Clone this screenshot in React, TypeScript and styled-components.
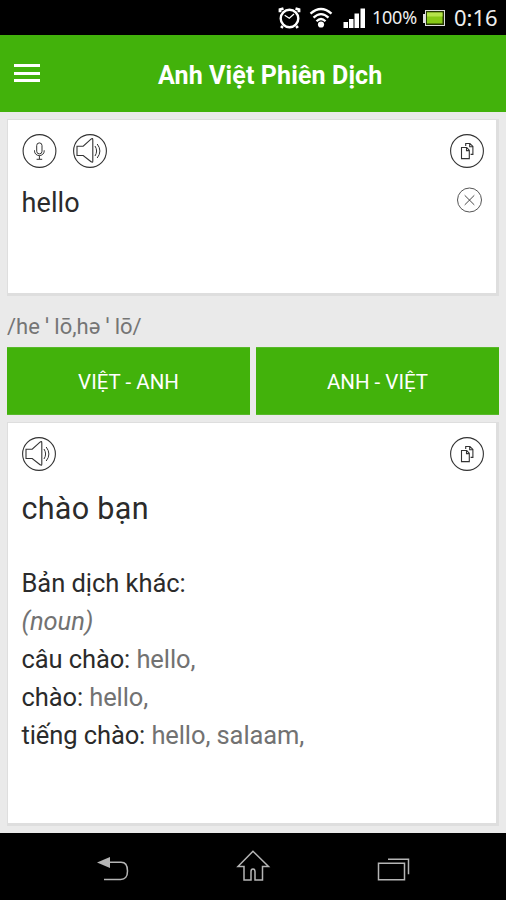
import React from 'react';
import styled, { createGlobalStyle } from 'styled-components';

const Global = createGlobalStyle`
  * { box-sizing: border-box; }
  body { margin: 0; background: #000; font-family: Roboto, "Noto Sans", sans-serif; }
`;

const Screen = styled.div`
  width: 506px;
  height: 900px;
  display: flex;
  flex-direction: column;
  background: #eaeaea;
  overflow: hidden;
`;

const StatusBar = styled.div`
  height: 35px;
  flex: none;
  background: #000;
  display: flex;
  align-items: center;
  justify-content: flex-end;
  padding-right: 8px;
  color: #eee;
  font-family: "Noto Sans", sans-serif;
`;

const StatusIcons = styled.svg`
  display: block;
  flex: none;
`;

const StatusText = styled.span<{ $size: number; $gap: number; $width: number; $tracking: number }>`
  flex: none;
  width: ${p => p.$width}px;
  font-size: ${p => p.$size}px;
  letter-spacing: ${p => p.$tracking}px;
  margin-left: ${p => p.$gap}px;
  line-height: 35px;
  white-space: nowrap;
`;

const Header = styled.header`
  height: 76.5px;
  flex: none;
  background: #42b20b;
  display: grid;
  grid-template-columns: 34px 1fr;
  align-items: center;
  padding: 0 0 0 14px;
`;

const MenuButton = styled.div`
  width: 26px;
  height: 18px;
  display: flex;
  flex-direction: column;
  justify-content: space-between;
`;

const MenuLine = styled.span`
  height: 3px;
  background: #fff;
`;

const Title = styled.h1`
  margin: 6px 0 0 110px;
  color: #fff;
  font-size: 25px;
  font-weight: 700;
  line-height: 32px;
  letter-spacing: 0.12px;
  white-space: nowrap;
`;

const Content = styled.main`
  flex: 1;
  display: flex;
  flex-direction: column;
  padding: 7.5px 7px 7px;
`;

const Card = styled.section<{ $height: number }>`
  height: ${p => p.$height}px;
  flex: none;
  background: #fff;
  border: solid #dedede;
  border-width: 1px 3px 3px 1px;
  padding: 13px 12px 0 14px;
`;

const Toolbar = styled.div`
  display: flex;
  height: 36px;
  gap: 15px;
`;

const Spacer = styled.div`
  flex: 1;
`;

const Icon = styled.svg`
  display: block;
  flex: none;
  fill: none;
  stroke: #333;
`;

const InputRow = styled.div`
  display: flex;
  justify-content: space-between;
  align-items: center;
  padding: 13px 0 0;
`;

const Line = styled.p<{ $size: number; $height: number; $top?: number; $tracking?: number }>`
  margin: ${p => p.$top ?? 0}px 0 0 -0.5px;
  font-size: ${p => p.$size}px;
  line-height: ${p => p.$height}px;
  letter-spacing: ${p => p.$tracking ?? 0}px;
  color: #2b2b2b;
  white-space: pre;
`;

const Muted = styled.span`
  color: #727272;
`;

const Phonetic = styled.div`
  height: 51px;
  padding-top: 16px;
  color: #757575;
  font-size: 22px;
  line-height: 30px;
  white-space: pre;
`;

const Actions = styled.div`
  display: grid;
  grid-template-columns: 1fr 1fr;
  gap: 6px;
  height: 68px;
  margin: 0 0 7px;
`;

const ActionButton = styled.button`
  border: 0;
  border-top: 1px solid #58b92a;
  border-bottom: 1px solid #58b92a;
  background: #42b20b;
  color: #fff;
  font: 400 20.5px/30px Roboto, sans-serif;
  padding: 1px 0 0;
`;

const NavBar = styled.nav`
  height: 67px;
  flex: none;
  background: #000;
`;

const Sound = () => (
  <Icon width="34" height="36" viewBox="0 0 34 36">
    <circle cx="17" cy="18" r="16.4" strokeWidth="1.1" />
    <path d="M4 13.2h6.2L18 6.200q1.800-1.500 1.800.700v21q0 2.200-1.700.800L10.200 22.500H4z" strokeWidth="1.100" />
    <path d="M22 13q3.200 5 0 10M24.200 11q5.400 7 0 14" strokeWidth="1" />
  </Icon>
);

const Mic = () => (
  <Icon width="36" height="36" viewBox="0 0 36 36">
    <circle cx="17.500" cy="18" r="16.400" strokeWidth="1.100" />
    <rect x="14.700" y="9.900" width="5.300" height="11" rx="2.650" />
    <path d="M12.500 17.300v.8a4.850 4.500 0 0 0 9.700 0v-.8M17.400 22.700v3.300M14.600 26.300h5.600" />
  </Icon>
);

const Copy = () => (
  <Icon width="34" height="36" viewBox="0 0 34 36">
    <circle cx="17" cy="18" r="16.400" strokeWidth="1.100" />
    <path d="M11.500 14.500h5.200l2.600 2.800v8.300h-7.800zM16.500 14.600v3h2.800M15.700 13v-2.500h4.200l3 2.900v8h-2.300M19.700 10.600v3.100h3.100" strokeWidth="1.100" />
  </Icon>
);

const Clear = () => (
  <Icon width="28" height="28" viewBox="0 0 28 28">
    <circle cx="13.500" cy="13" r="12" stroke="#555" />
    <path d="M8.700 8.300l9.600 9.600M18.300 8.300l-9.600 9.600" strokeWidth=".9" />
  </Icon>
);

export default function App() {
  return (
    <>
      <Global />
      <Screen>
        <StatusBar>
          <StatusIcons width="88" height="35" viewBox="0 0 88 35" fill="none" stroke="#fff">
            <circle cx="11.500" cy="18.500" r="8.800" strokeWidth="2.400" />
            <path d="M2 12.200V9.500l3.500-1M21 12.200V9.500l-3.500-1M4.600 26l-1.300 2M18.400 26l1.300 2" strokeWidth="2.800" />
            <path d="M6.700 15.300l4.600 3 4.700-4.200" strokeWidth="1.300" />
            <path d="M32.500 13.700q10.500-9.500 21 0M35.500 17.600q7.500-7 15 0M38.500 21.200q4.500-4.400 9 0" strokeWidth="2.300" />
            <circle cx="43" cy="24.500" r="3.100" fill="#fff" stroke="none" />
            <path d="M65.500 22h4.500v6h-4.500zM71 19h4.500v9H71zM76.500 13.500H81V28h-4.500zM82.500 8.500H87V28h-4.500z" fill="#fff" stroke="none" />
          </StatusIcons>
          <StatusText $size={18} $gap={6} $width={47} $tracking={-0.25}>100%</StatusText>
          <StatusIcons width="28" height="35" viewBox="0 0 28 35">
            <path d="M6 10h20v16H6v-3H4v-9h2z" fill="#ddd" />
            <path d="M7 11h18V25H7z" fill="#263800" />
            <path d="M8 12.500h15.500v11H8z" fill="#87c916" />
            <path d="M8 12.500h15.500v4H8z" fill="#b5e34b" />
          </StatusIcons>
          <StatusText $size={22} $gap={7} $width={44} $tracking={0}>0:16</StatusText>
        </StatusBar>
        <Header>
          <MenuButton><MenuLine /><MenuLine /><MenuLine /></MenuButton>
          <Title>Anh Việt Phiên Dịch</Title>
        </Header>
        <Content>
          <Card $height={177}>
            <Toolbar><Mic /><Sound /><Spacer /><Copy /></Toolbar>
            <InputRow>
              <Line $size={27} $height={34} $top={4} $tracking={0.1}>hello</Line>
              <Clear />
            </InputRow>
          </Card>
          <Phonetic>/he ˈ lō,hə ˈ lō/</Phonetic>
          <Actions>
            <ActionButton>VIỆT - ANH</ActionButton>
            <ActionButton>ANH - VIỆT</ActionButton>
          </Actions>
          <Card $height={404}>
            <Toolbar><Sound /><Spacer /><Copy /></Toolbar>
            <Line $size={30.5} $height={40} $top={17} $tracking={0.3}>chào bạn</Line>
            <Line $size={25.5} $height={38} $top={35} $tracking={-0.05}>Bản dịch khác:</Line>
            <Line $size={25.5} $height={38} $tracking={-0.05}><Muted as="em">(noun)</Muted></Line>
            <Line $size={25.5} $height={38} $tracking={-0.1}>câu chào: <Muted>hello,</Muted></Line>
            <Line $size={25.5} $height={38} $tracking={-0.1}>chào: <Muted>hello,</Muted></Line>
            <Line $size={25.5} $height={38} $tracking={-0.1}>tiếng chào: <Muted>hello, salaam,</Muted></Line>
          </Card>
        </Content>
        <NavBar>
          <StatusIcons width="506" height="67" viewBox="0 0 506 67" fill="none" stroke="#b5b5b5" strokeWidth="1.500">
            <path d="M97 29.500l13-5.500v11z" fill="#b5b5b5" stroke="none" />
            <path d="M109 29.200h12q6.500 0 6.500 8.700t-7 8.600H104" />
            <path d="M253 18.300L238 33.500h6V47h7v-8.500q0-2.500 2-2.500t2 2.500V47h7.500V33.500h6z" />
            <path d="M378.500 30.200h26V46.700h-26zM388 26.300h20.500v15" />
          </StatusIcons>
        </NavBar>
      </Screen>
    </>
  );
}
